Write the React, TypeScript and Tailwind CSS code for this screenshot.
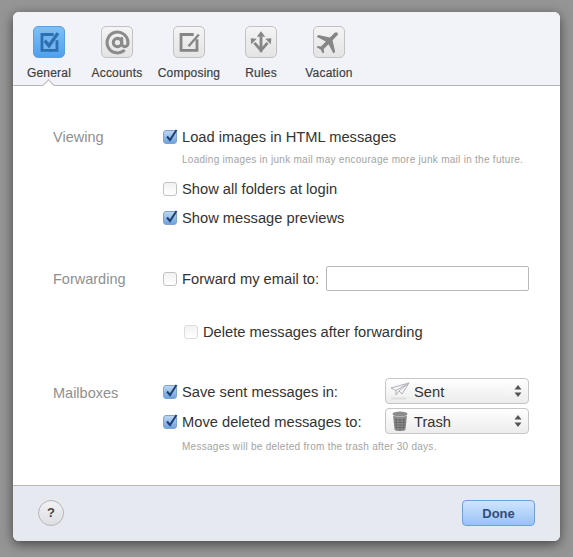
import React from 'react';
import { AtSign } from 'lucide-react';

const tabs = [
  { label: 'General', width: 'w-[72px]', active: true },
  { label: 'Accounts', width: 'w-[64px]' },
  { label: 'Composing', width: 'w-[80px]' },
  { label: 'Rules', width: 'w-[64px]' },
  { label: 'Vacation', width: 'w-[72px]' },
];

const TabGlyph: React.FC<{ name: string }> = ({ name }) => {
  if (name === 'General') {
    return (
      <svg width="32" height="32" viewBox="0 0 32 32">
        <rect x="8" y="8" width="17" height="17" fill="#6fb4ef" />
        <path d="M21 8H8.500v17h16V14" fill="none" stroke="#2e6fb0" strokeWidth="3" />
        <path d="M11.500 14.500l4.500 5.500 9.500-13.500" fill="none" stroke="#2e6fb0" strokeWidth="3.500" />
      </svg>
    );
  }
  if (name === 'Accounts') {
    return <AtSign size={25} strokeWidth={3} className="text-[#8b8b8b]" />;
  }
  if (name === 'Composing') {
    return (
      <svg width="32" height="32" viewBox="0 0 32 32">
        <path d="M21 8H7.500v17h17V13" fill="none" stroke="#868686" strokeWidth="3" />
        <path d="M15.500 20.500L26.500 8" stroke="#868686" strokeWidth="2.500" />
      </svg>
    );
  }
  if (name === 'Rules') {
    return (
      <svg width="32" height="32" viewBox="0 0 32 32">
        <path d="M16 10v17M16 25l-7-8M16 25l7-8" fill="none" stroke="#868686" strokeWidth="3" />
        <path d="M16 4.500l4.500 6h-9zM5 12l6.500.5-6 6zM27 12l-6.500.5 6 6z" fill="#868686" />
      </svg>
    );
  }
  return (
    <svg width="32" height="32" viewBox="0 0 24 24">
      <path
        transform="rotate(45 12 12)"
        d="M21 16v-2l-8-5V3.500c0-.83-.67-1.500-1.500-1.500S10 2.670 10 3.500V9l-8 5v2l8-2.500V19l-2 1.500V22l3.500-1 3.500 1v-1.500L13 19v-5.500l8 2.500z"
        fill="#868686"
      />
    </svg>
  );
};

const Checkbox: React.FC<{ checked?: boolean; faint?: boolean }> = ({ checked, faint }) =>
  checked ? (
    <span className="relative block w-[14px] h-[14px] shrink-0 rounded-[3px] border border-[#7fa3cf] bg-gradient-to-b from-[#bcd6f3] to-[#6da3e0]">
      <svg className="absolute left-[0px] -top-[3px]" width="16" height="16" viewBox="0 0 16 16">
        <path d="M3 8.500l3 3.500 6.500-10" fill="none" stroke="#1f3f6e" strokeWidth="2" />
      </svg>
    </span>
  ) : (
    <span
      className={`block w-[14px] h-[14px] shrink-0 rounded-[3px] border bg-gradient-to-b from-[#f2f2f2] to-[#ffffff] ${
        faint ? 'border-[#dcdcdc]' : 'border-[#c2c2c2]'
      }`}
    />
  );

const Option: React.FC<{ label: string; checked?: boolean; faint?: boolean; className?: string }> = ({
  label,
  checked,
  faint,
  className,
}) => (
  <div className={`flex items-center gap-[5px] ${className ?? ''}`}>
    <Checkbox checked={checked} faint={faint} />
    <span className="text-[14.7px] leading-[20px] text-[#333333]">{label}</span>
  </div>
);

const SectionLabel: React.FC<{ children: React.ReactNode; className?: string }> = ({ children, className }) => (
  <span className={`w-[110px] shrink-0 text-[14.5px] leading-[20px] text-[#8f8f8f] ${className ?? ''}`}>{children}</span>
);

const Note: React.FC<{ children: React.ReactNode; className?: string }> = ({ children, className }) => (
  <p className={`ml-[110px] pl-[19px] h-[14px] text-[10px] leading-[14px] tracking-[0.28px] text-[#a3a3a3] ${className}`}>
    {children}
  </p>
);

const Select: React.FC<{ label: string; icon: React.ReactNode }> = ({ label, icon }) => (
  <div className="flex items-center w-[144px] h-[26px] shrink-0 rounded-[4px] border border-[#c6c6c6] bg-gradient-to-b from-[#ffffff] to-[#ececec]">
    <span className="flex w-[27px] mr-[1px] justify-center">{icon}</span>
    <span className="flex-1 pt-[2px] text-[14.7px] text-[#333333]">{label}</span>
    <svg className="mr-[5px]" width="10" height="14" viewBox="0 0 10 14">
      <path d="M5 1l3.500 4.500h-7zM5 13l3.500-4.500h-7z" fill="#555555" />
    </svg>
  </div>
);

const SentIcon = () => (
  <svg width="20" height="20" viewBox="0 0 20 20">
    <path d="M1 7l18-5-7 11-3-3-3 4v-4.500z" fill="#f6f6f8" stroke="#b0b2b8" strokeWidth="1" />
    <path d="M6 9.500L19 2 9 10" fill="none" stroke="#b0b2b8" strokeWidth="1" />
    <path d="M1 17.500h15" stroke="#dedede" strokeWidth="2" />
  </svg>
);

const TrashIcon = () => (
  <svg width="16" height="21" viewBox="0 0 16 21">
    <ellipse cx="8" cy="3" rx="7.500" ry="2.500" fill="#8c8c8c" />
    <path d="M1 4.500l1.500 14c.5 2 10.500 2 11 0l1.500-14c-2 1.500-12 1.500-14 0z" fill="#8e8e8e" />
    <path d="M4 6.500l1 12.500M8 7v13M12 6.500l-1 12.500M2 9h12M2 11.500h12M2.500 14h11M3 16.500h10" stroke="#5f5f5f" strokeWidth="0.7" />
  </svg>
);

const App: React.FC = () => {
  return (
    <div className="w-[573px] h-[557px] overflow-hidden bg-[#959595] pt-[12px] pl-[13px] font-['Liberation_Sans',Arial,sans-serif]">
      <div className="flex flex-col w-[547px] h-[529px] overflow-hidden rounded-[6px] bg-white shadow-[0_3px_12px_rgba(0,0,0,0.55)]">
        {/* Toolbar */}
        <header className="relative flex h-[74px] shrink-0 border-b border-[#b4b4b8] bg-[#f2f3f8] pt-[14px]">
          {tabs.map((tab) => (
            <div key={tab.label} className={`flex flex-col items-center ${tab.width}`}>
              <div
                className={`flex w-[32px] h-[32px] items-center justify-center rounded-[5px] border ${
                  tab.active
                    ? 'border-[#5a9fe0] bg-gradient-to-b from-[#7cc0f7] to-[#4fa0ee]'
                    : 'border-[#c2c2c2] bg-gradient-to-b from-[#f4f4f4] to-[#e4e4e4]'
                }`}
              >
                <TabGlyph name={tab.label} />
              </div>
              <span className="mt-[8px] whitespace-nowrap text-[12px] leading-[14px] tracking-[0.2px] [-webkit-text-stroke:0.2px_#3f3f3f] text-[#3f3f3f]">
                {tab.label}
              </span>
            </div>
          ))}
          <span className="absolute left-[31px] bottom-[-5px] w-[9px] h-[9px] rotate-45 border-l border-t border-[#b4b4b8] bg-white" />
        </header>

        {/* Settings */}
        <main className="flex-1 pl-[40px] pt-[41px]">
          <div className="flex h-[20px]">
            <SectionLabel>Viewing</SectionLabel>
            <Option label="Load images in HTML messages" checked />
          </div>
          <Note className="mt-[6px]">Loading images in junk mail may encourage more junk mail in the future.</Note>
          <div className="flex h-[20px] mt-[12px] ml-[110px]">
            <Option label="Show all folders at login" />
          </div>
          <div className="flex h-[20px] mt-[9px] ml-[110px]">
            <Option label="Show message previews" checked />
          </div>

          <div className="flex items-center h-[25px] mt-[38px]">
            <SectionLabel>Forwarding</SectionLabel>
            <Option label="Forward my email to:" />
            <input className="ml-[7px] w-[203px] h-[25px] rounded-[2px] border border-[#b9b9b9] bg-white" />
          </div>
          <div className="flex h-[20px] mt-[31px] ml-[131px]">
            <Option label="Delete messages after forwarding" faint />
          </div>

          <div className="flex items-start h-[26px] mt-[36px]">
            <SectionLabel className="mt-[5px]">Mailboxes</SectionLabel>
            <Option className="mt-[4px] w-[222px]" label="Save sent messages in:" checked />
            <Select label="Sent" icon={<SentIcon />} />
          </div>
          <div className="flex items-start h-[26px] mt-[4px] pl-[110px]">
            <Option className="mt-[4px] w-[222px]" label="Move deleted messages to:" checked />
            <Select label="Trash" icon={<TrashIcon />} />
          </div>
          <Note className="mt-[6px]">Messages will be deleted from the trash after 30 days.</Note>
        </main>

        {/* Footer */}
        <footer className="flex h-[56px] shrink-0 items-center justify-between border-t border-[#b9b9bc] bg-[#e7e9f1] pl-[25px] pr-[25px] pb-[1px]">
          <button className="w-[26px] h-[26px] rounded-full border border-[#b5b5b8] bg-gradient-to-b from-[#f2f2f4] to-[#dedfe3] text-[13px] font-bold text-[#444444]">
            ?
          </button>
          <button className="w-[73px] h-[26px] rounded-[4px] border border-[#6f9fdc] bg-gradient-to-b from-[#cfe5fe] to-[#99c2f4] pt-[1px] text-[13px] font-bold text-[#2f4f7f]">
            Done
          </button>
        </footer>
      </div>
    </div>
  );
};

export default App;
